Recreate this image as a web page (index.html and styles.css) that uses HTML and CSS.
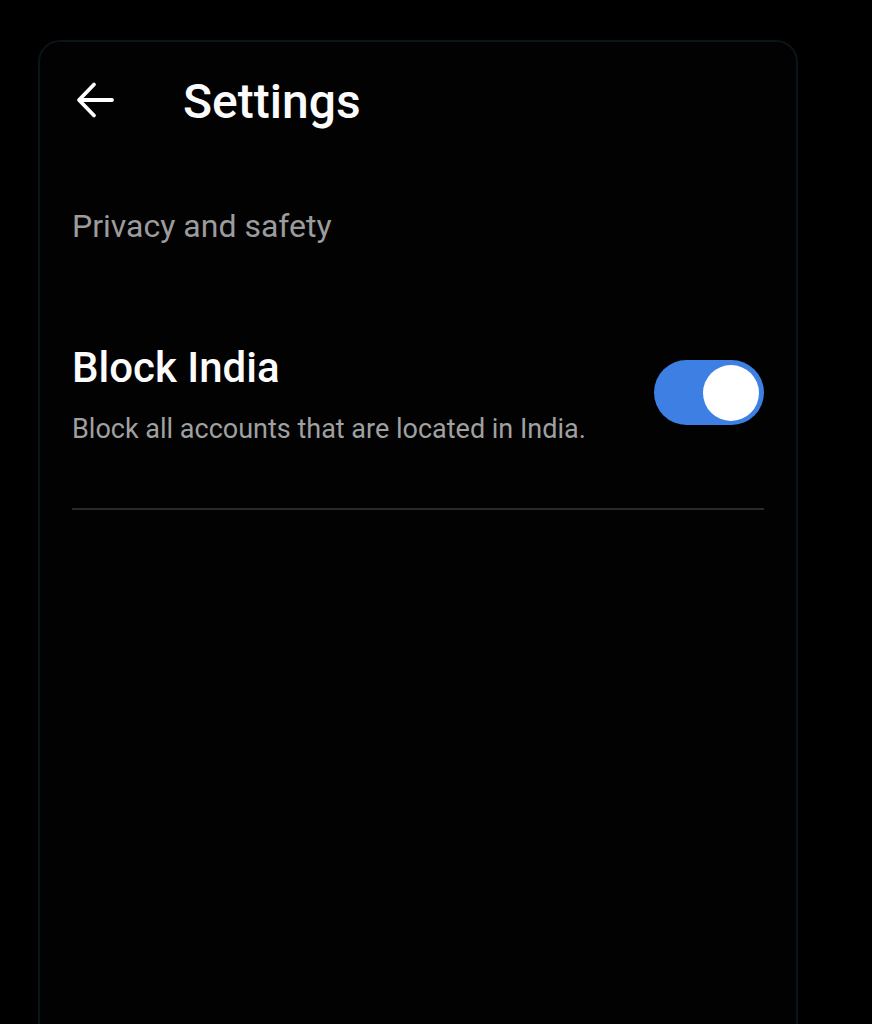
FILE: index.html
```html
<!DOCTYPE html>
<html lang="en">
<head>
<meta charset="utf-8">
<title>Settings</title>
<link rel="stylesheet" href="styles.css">
</head>
<body>
<div class="card">
  <header class="header">
    <svg class="back" width="44" height="44" viewBox="0 0 44 44" aria-hidden="true">
      <path d="M40 21 H8 M22 5.5 L7 21 L22 36.5" fill="none" stroke="#ffffff" stroke-width="3.8" stroke-linecap="round" stroke-linejoin="round"/>
    </svg>
    <h1 class="title">Settings</h1>
  </header>
  <div class="section-label">Privacy and safety</div>
  <div class="setting-row">
    <div class="setting-text">
      <div class="setting-title">Block India</div>
      <div class="setting-desc">Block all accounts that are located in India.</div>
    </div>
    <div class="toggle on"><span class="knob"></span></div>
  </div>
  <div class="divider"></div>
</div>
</body>
</html>
```
FILE: styles.css
```css
html, body {
  margin: 0;
  padding: 0;
  background: #000;
  overflow: hidden;
}
body {
  font-family: Roboto, "Noto Sans", "Liberation Sans", sans-serif;
  color: #fff;
  height: 1024px;
}
.card {
  margin: 40px 0 0 38px;
  width: 760px;
  min-height: 1100px;
  box-sizing: border-box;
  border: 2px solid #0b1419;
  border-radius: 22px;
  background: #020202;
  padding: 32px 32px 0 32px;
}
.header {
  display: flex;
  align-items: center;
  height: 56px;
}
.back {
  display: block;
  flex: none;
  margin-right: 67px;
  margin-top: -2px;
}
.title {
  margin: 0;
  font-size: 48px;
  line-height: 56px;
  font-weight: 500;
  color: #fbfbfb;
}
.section-label {
  margin-top: 76px;
  font-size: 32px;
  line-height: 40px;
  color: #9c9c9c;
}
.setting-row {
  display: flex;
  align-items: flex-start;
  justify-content: space-between;
  margin-top: 97px;
}
.setting-title {
  font-size: 42px;
  line-height: 50px;
  font-weight: 500;
  color: #fcfcfc;
}
.setting-desc {
  margin-top: 19px;
  font-size: 27px;
  line-height: 34px;
  color: #a0a0a0;
}
.toggle {
  width: 110px;
  height: 65px;
  box-sizing: border-box;
  border-radius: 33px;
  background: #3d7fe2;
  display: flex;
  align-items: center;
  justify-content: flex-end;
  padding: 0 5px;
  margin-top: 17px;
}
.knob {
  width: 56px;
  height: 56px;
  border-radius: 50%;
  background: #ffffff;
}
.divider {
  margin-top: 62px;
  height: 2px;
  background: #2a2a2a;
}
```
